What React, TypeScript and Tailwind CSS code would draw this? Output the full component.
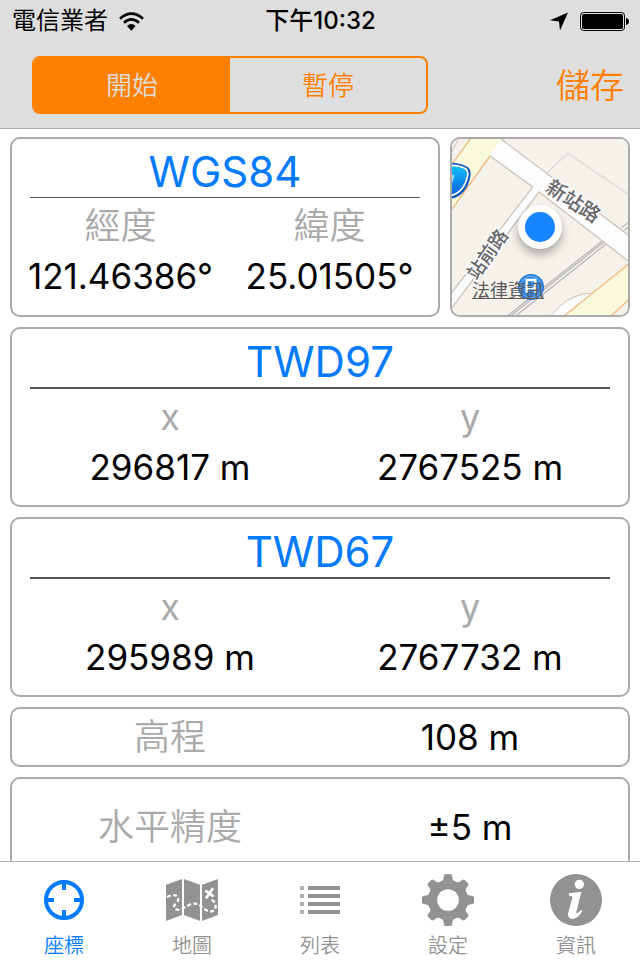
import React, { useState } from 'react';

const TabIcons = {
  target: (
    <svg viewBox="114 57 156 156" className="size-13" aria-hidden="true">
      <circle cx="192" cy="135" r="54" fill="none" stroke="currentColor" strokeWidth="12" />
      <path d="M192 75v30M192 165v30M132 135h30M222 135h30" stroke="currentColor" strokeWidth="12" />
    </svg>
  ),
  map: (
    <svg viewBox="498 57 156 156" className="size-13" aria-hidden="true">
      <path d="M498 89L546 72V180L498 198ZM552 72L600 89V198L552 180ZM606 89L654 72V180L606 198Z" fill="currentColor" />
      <g fill="none" stroke="#fff" strokeWidth="7">
        <path d="M501 126L513 121Q533 118 535 131Q536 137 529 143Q519 152 524 160Q532 168 545 162L567 150Q586 141 600 151L615 163Q631 175 644 165Q651 153 642 140L632 131" strokeDasharray="12 7" />
        <path d="M616 107L641 124M639 100L618 130" strokeWidth="8" />
      </g>
    </svg>
  ),
  list: (
    <svg viewBox="114 57 156 156" className="size-13" aria-hidden="true">
      <path d="M132 93h12v12h-12zM132 117h12v12h-12zM132 141h12v12h-12zM132 165h12v12h-12z" fill="#b2b2b2" />
      <path d="M156 93h96v12h-96zM156 117h96v12h-96zM156 141h96v12h-96zM156 165h96v12h-96z" fill="currentColor" />
    </svg>
  ),
  gear: (
    <svg viewBox="-78 -78 156 156" className="size-13" aria-hidden="true">
      <circle r="46" fill="none" stroke="currentColor" strokeWidth="27" />
      {[0, 45, 90, 135, 180, 225, 270, 315].map((a) => (
        <path
          key={a}
          transform={`rotate(${a})`}
          d="M-12 -73Q-12 -78 -7 -78H7Q12 -78 12 -73L14 -62Q16 -57 24 -54L18 -45H-18L-24 -54Q-16 -57 -14 -62Z"
          fill="currentColor"
        />
      ))}
    </svg>
  ),
  info: (
    <svg viewBox="150 57 156 156" className="size-13" aria-hidden="true">
      <circle cx="228" cy="135" r="78" fill="currentColor" />
      <circle cx="238" cy="88" r="14" fill="#fff" />
      <path d="M207 115L244 110L229 171Q228 181 243 164L247 168Q233 192 216 192Q201 190 205 172L217 129Q218 122 207 122Z" fill="#fff" />
    </svg>
  ),
};

const tabs = [
  { id: 'coords', label: '座標', icon: TabIcons.target },
  { id: 'map', label: '地圖', icon: TabIcons.map },
  { id: 'list', label: '列表', icon: TabIcons.list },
  { id: 'settings', label: '設定', icon: TabIcons.gear },
  { id: 'info', label: '資訊', icon: TabIcons.info },
];

const grids = [
  { name: 'TWD97', x: '296817 m', y: '2767525 m' },
  { name: 'TWD67', x: '295989 m', y: '2767732 m' },
];

function StatusBar() {
  return (
    <div className="grid h-[42px] grid-cols-[1fr_auto_1fr] items-center pl-3 pr-[11px] font-['Inter','Noto_Sans_CJK_TC',sans-serif] text-2xl text-black">
      <div className="flex items-center gap-[11px]">
        <span>電信業者</span>
        <svg viewBox="355 32 75 57" className="h-[19px] w-[25px]" aria-label="Wi-Fi">
          <g fill="none" stroke="#000" strokeWidth="8">
            <path d="M358 52Q392 22 427 52" />
            <path d="M370 64Q392 44 415 64" />
          </g>
          <path d="M379 74Q392 62 405 74L392 88Z" />
        </svg>
      </div>
      <span className="font-medium">下午10:32</span>
      <div className="flex items-center justify-end gap-3">
        <svg viewBox="691 35 54 56" className="h-[19px] w-[18px]" aria-label="定位">
          <path d="M745 36L721 90L718 63L691 59Z" />
        </svg>
        <svg viewBox="780 33 147 57" className="h-[19px] w-[49px]" aria-label="電池">
          <rect x="781.5" y="34.5" width="132" height="54" rx="9" fill="none" stroke="#000" strokeWidth="3" />
          <rect x="786" y="39" width="123" height="45" rx="5" />
          <path d="M918 51Q927 53 927 61.500Q927 70 918 72Z" />
        </svg>
      </div>
    </div>
  );
}

function MiniMap() {
  return (
    <div className="relative aspect-square w-[180px] shrink-0 overflow-hidden rounded-[10px] border-2 border-[#aaa] font-['Noto_Sans_CJK_TC',sans-serif]">
      <svg viewBox="36 27 528 528" className="block size-full" aria-hidden="true">
        <defs>
          <linearGradient id="shield" x1="0" y1="0" x2="0" y2="1">
            <stop offset="0" stopColor="#12c0fb" />
            <stop offset="1" stopColor="#0a5fdc" />
          </linearGradient>
          <filter id="shadow" x="-50%" y="-50%" width="200%" height="200%">
            <feGaussianBlur stdDeviation="14" />
          </filter>
        </defs>
        <rect x="36" y="27" width="528" height="528" fill="#f5f2eb" />
        <path d="M36 65L55 27" stroke="#cdc3bb" strokeWidth="3" />
        <path d="M320 130L383 70L570 196" fill="none" stroke="#dfded9" strokeWidth="5" />

        {/* highway */}
        <path d="M30 111L93 20H190L150 75L30 246Z" fill="#f9f9dc" />
        <path d="M30 111L93 24M150 78L30 246" fill="none" stroke="#f3b880" strokeWidth="4" />
        <path d="M370 560L570 399V506L510 560Z" fill="#f9f9dc" />
        <path d="M330 560Q385 500 455 489L372 560Z" fill="#fcfdfe" />
        <path d="M330 560L360 527Q400 492 455 489" fill="none" stroke="#cdc3bb" strokeWidth="3" />
        <path d="M372 558L570 399M510 560L570 506" fill="none" stroke="#f3b880" strokeWidth="4" />

        {/* railway */}
        <g fill="none" stroke="#b9b8b8" strokeWidth="4">
          <path d="M200 560L488 332M207 562L492 336M220 564L498 342" />
          <path d="M546 292L570 274M553 300L570 288" />
        </g>

        {/* streets */}
        <path d="M150 75L185 27L570 319V397L297 186L30 541V495L278 171Z" fill="#fcfdff" />
        <path d="M183 27L570 319M150 78L278 171L30 495M570 397L297 186L30 541" fill="none" stroke="#cfc3ba" strokeWidth="4" />

        <path d="M30 98Q62 98 84 112Q94 120 91 140Q80 198 30 207Z" fill="#0b55bd" />
        <path d="M30 106Q60 106 78 117Q85 123 83 137Q73 188 30 198Z" fill="url(#shield)" stroke="#fff" strokeWidth="5" />
        <path d="M30 132L40 138L34 158" fill="none" stroke="#9fd9f7" strokeWidth="6" />

        <circle cx="273" cy="471" r="39" fill="#1f76d8" />
        <circle cx="273" cy="471" r="33" fill="#2f8ae8" stroke="#7db8f3" strokeWidth="3" />
        <path d="M260 450H286V474H260ZM260 474V488M286 474V488" fill="none" stroke="#fff" strokeWidth="7" />

        <g fill="#66666a" stroke="#fafafa" strokeWidth="10" strokeLinejoin="round" paintOrder="stroke" textAnchor="middle" fontWeight="500">
          <text transform="translate(400 213) rotate(33)" y="22" fontSize="60">新站路</text>
          <text transform="translate(142 373) rotate(-55)" y="20" fontSize="56">站前路</text>
        </g>

        <circle cx="300" cy="308" r="66" opacity="0.3" filter="url(#shadow)" />
        <circle cx="300" cy="291" r="66" fill="#fff" />
        <circle cx="300" cy="291" r="45" fill="#1785ff" />
      </svg>
      <a href="#legal" className="absolute bottom-3 left-5 text-lg text-[#5c5c5c] underline">
        法律資訊
      </a>
    </div>
  );
}

function Field({ label, value }: { label: string; value: string }) {
  return (
    <div className="text-center">
      <dt className="text-4xl leading-[56px] text-[#aaa]">{label}</dt>
      <dd className="text-[35px] leading-[44px] text-black">{value}</dd>
    </div>
  );
}

export default function App() {
  const [running, setRunning] = useState(true);
  const [tab, setTab] = useState('coords');

  return (
    <div className="flex h-screen flex-col bg-white font-['Inter','Noto_Sans_CJK_TC_DemiLight','Noto_Sans_CJK_TC',sans-serif]">
      <header className="shrink-0 border-b border-[#b0b0b0] bg-[#dedede]">
        <StatusBar />
        <div className="flex h-[86px] items-center justify-between pl-8 pr-4">
          <div className="flex h-[58px] w-[396px] overflow-hidden rounded-lg border-2 border-[#ff8000] text-[26px]">
            <button
              onClick={() => setRunning(true)}
              className={`flex-1 ${running ? 'bg-[#ff8000] text-[#dedede]' : 'text-[#ff8000]'}`}
            >
              開始
            </button>
            <button
              onClick={() => setRunning(false)}
              className={`flex-1 ${running ? 'text-[#ff8000]' : 'bg-[#ff8000] text-[#dedede]'}`}
            >
              暫停
            </button>
          </div>
          <button className="text-[34px] text-[#ff8000]">儲存</button>
        </div>
      </header>

      <main className="flex min-h-0 flex-1 flex-col gap-[10px] overflow-y-auto px-[10px] pt-2 [scrollbar-width:none]">
        <div className="flex shrink-0 gap-[10px]">
          <section className="flex-1 rounded-[10px] border-2 border-[#aaa]">
            <h2 className="mx-[18px] border-b border-[#555] pt-2 text-center text-[42px] leading-[50px] text-[#007aff]">WGS84</h2>
            <dl className="grid grid-cols-2 px-1">
              <Field label="經度" value="121.46386°" />
              <Field label="緯度" value="25.01505°" />
            </dl>
          </section>
          <MiniMap />
        </div>

        {grids.map((g) => (
          <section key={g.name} className="shrink-0 rounded-[10px] border-2 border-[#aaa] pb-4">
            <h2 className="mx-[18px] border-b-2 border-[#555] pt-2 text-center text-[42px] leading-[50px] text-[#007aff]">{g.name}</h2>
            <dl className="grid grid-cols-2 px-2">
              <Field label="x" value={g.x} />
              <Field label="y" value={g.y} />
            </dl>
          </section>
        ))}

        <dl className="grid shrink-0 grid-cols-2 rounded-[10px] border-2 border-[#aaa] px-2 text-center leading-[56px]">
          <dt className="text-4xl leading-[56px] text-[#aaa]">高程</dt>
          <dd className="text-[35px] leading-[56px] text-black">108 m</dd>
        </dl>
        <dl className="grid shrink-0 grid-cols-2 rounded-[10px] border-2 border-[#aaa] px-2 py-5 text-center leading-[56px]">
          <dt className="text-4xl leading-[56px] text-[#aaa]">水平精度</dt>
          <dd className="text-[35px] leading-[56px] text-black">±5 m</dd>
        </dl>
      </main>

      <nav className="flex shrink-0 border-t border-[#b0b0b0] bg-white pt-3">
        {tabs.map((t) => (
          <button
            key={t.id}
            onClick={() => setTab(t.id)}
            className={`flex flex-1 flex-col items-center ${tab === t.id ? 'text-[#007aff]' : 'text-[#929292]'}`}
          >
            {t.icon}
            <span className="pt-1.5 text-xl leading-[28px]">{t.label}</span>
          </button>
        ))}
      </nav>
    </div>
  );
}
